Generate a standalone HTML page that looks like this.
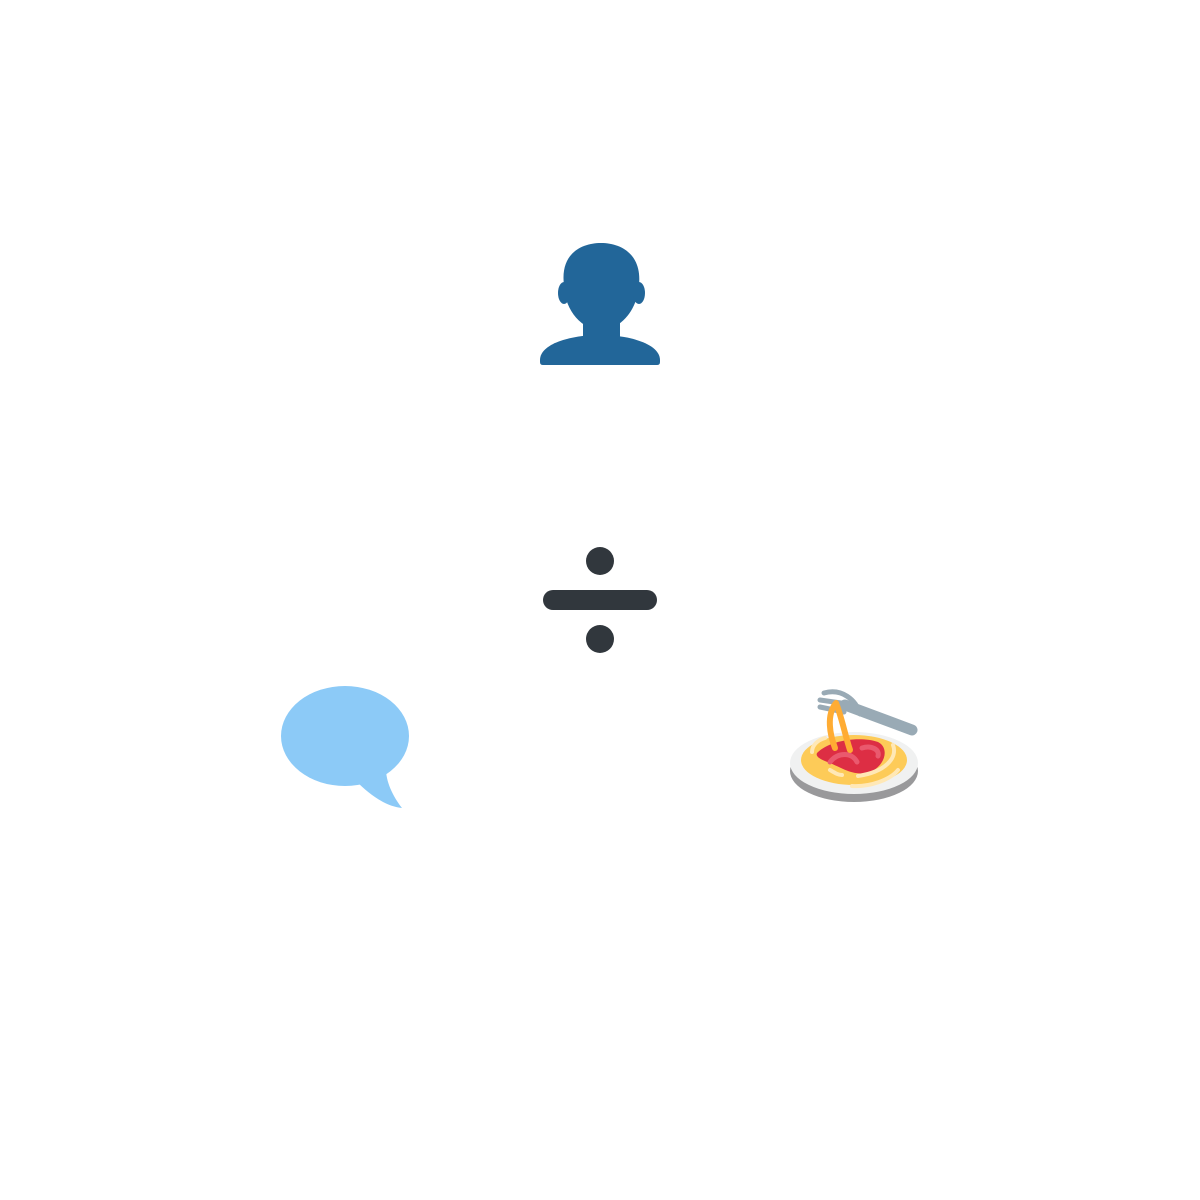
<!DOCTYPE html>
<html><head><style>html,body{margin:0;background:#fff;width:1200px;height:1200px;overflow:hidden}</style></head>
<body>
<svg width="1200" height="1200" viewBox="0 0 1200 1200" xmlns="http://www.w3.org/2000/svg">
<!-- person -->
<g fill="#226699">
<path d="M564 285 C560 255 580 243 601 243 C622 243 642 255 639 285 C638 305 625 328 601 331 C577 328 564 305 564 285Z"/>
<ellipse cx="564" cy="293" rx="6" ry="11"/>
<ellipse cx="639" cy="293" rx="6" ry="11"/>
<rect x="583" y="315" width="37" height="26"/>
<path d="M540 360 C540 344 570 335 600 335 C630 335 660 344 660 360 L660 362 Q660 365 657 365 L543 365 Q540 365 540 362Z"/>
</g>
<!-- divide -->
<g fill="#31373d">
<circle cx="600" cy="561" r="14"/>
<circle cx="600" cy="639" r="14"/>
<rect x="543" y="590" width="114" height="20" rx="10"/>
</g>
<!-- speech bubble -->
<g fill="#8ccaf7">
<ellipse cx="345" cy="736" rx="64" ry="50"/>
<path d="M355 780 C370 795 385 806 402 808 C392 795 385 780 386 765 Z"/>
</g>
<!-- spaghetti -->
<g>
<ellipse cx="854" cy="771" rx="64" ry="31" fill="#99999b"/>
<ellipse cx="854" cy="763" rx="64" ry="31" fill="#f0f1f1"/>
<ellipse cx="854" cy="760" rx="53" ry="25" fill="#fdcb58"/>
<path d="M817 753 C830 740 860 736 878 742 C890 748 885 766 870 772 C855 777 842 768 830 763 C822 760 815 757 817 753Z" fill="#dd2e44"/>
<path d="M830 762 C838 752 852 752 857 762 M862 748 C872 745 880 750 878 756" stroke="#ea596e" stroke-width="5" fill="none" stroke-linecap="round"/>
<path d="M812 752 C812 745 818 740 825 738 M893 745 C898 758 885 772 858 776 M830 770 C835 773 838 775 842 775 M852 786 C870 787 890 780 898 770" stroke="#ffe8b6" stroke-width="4" fill="none" stroke-linecap="round"/>
<path d="M845 705 L912 730" stroke="#99aab5" stroke-width="11" stroke-linecap="round"/>
<path d="M824 693 C842 688 856 700 860 714 M820 700 L848 704 M820 707 L844 712" stroke="#99aab5" stroke-width="5" fill="none" stroke-linecap="round"/>
<path d="M836 703 C826 715 830 735 835 748 M836 703 C842 718 845 735 850 750" stroke="#ffac33" stroke-width="6" fill="none" stroke-linecap="round"/>
</g>
</svg>
</body></html>
